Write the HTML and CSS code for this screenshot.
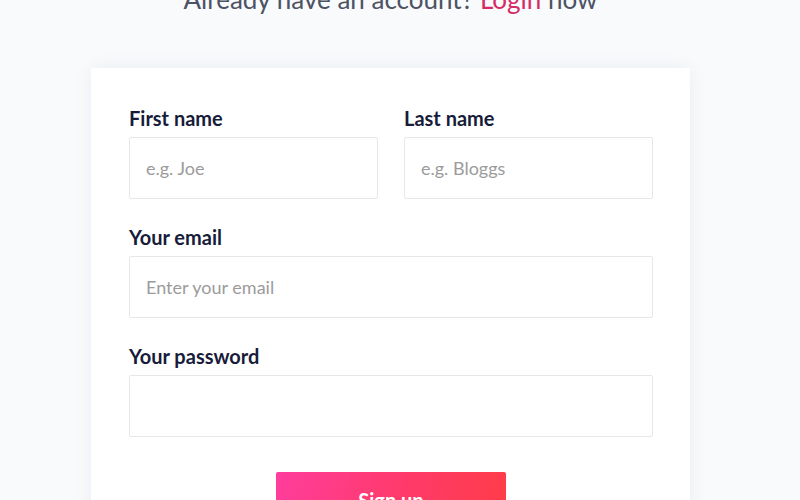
FILE: index.html
```html
<!DOCTYPE html>
<html lang="en">
<head>
<meta charset="utf-8">
<title>Sign up</title>
<link rel="stylesheet" href="styles.css">
</head>
<body>
<main class="page">
  <p class="intro">Already have an account? <a class="intro-link" href="#">Login</a> now</p>
  <form class="card">
    <div class="row two">
      <div class="field">
        <label class="label" for="fn">First name</label>
        <input class="input" id="fn" type="text" placeholder="e.g. Joe">
      </div>
      <div class="field">
        <label class="label" for="ln">Last name</label>
        <input class="input" id="ln" type="text" placeholder="e.g. Bloggs">
      </div>
    </div>
    <div class="field">
      <label class="label" for="em">Your email</label>
      <input class="input" id="em" type="email" placeholder="Enter your email">
    </div>
    <div class="field">
      <label class="label" for="pw">Your password</label>
      <input class="input" id="pw" type="password">
    </div>
    <div class="actions">
      <button class="btn" type="button">Sign up</button>
    </div>
  </form>
</main>
</body>
</html>
```
FILE: styles.css
```css
html, body {
  margin: 0;
  padding: 0;
  height: 100%;
  overflow: hidden;
}
body {
  background: #f9fafc;
  font-family: Lato, "Noto Sans", sans-serif;
  color: #1a1f3d;
}
.page {
  display: flex;
  flex-direction: column;
  align-items: center;
  padding-right: 19px;
}
.intro {
  margin: -17px 0 0 0;
  font-size: 26px;
  line-height: 32px;
  color: #4c5364;
  text-align: center;
}
.intro-link {
  color: #d42c67;
  text-decoration: none;
}
.card {
  margin-top: 53px;
  width: 524px;
  padding: 38px 37px 40px 38px;
  background: #fff;
  box-shadow: 0 0 18px rgba(30, 40, 70, 0.06);
  display: flex;
  flex-direction: column;
  gap: 26px;
}
.row.two {
  display: grid;
  grid-template-columns: 1fr 1fr;
  gap: 26px;
}
.field {
  display: flex;
  flex-direction: column;
  gap: 7px;
}
.label {
  font-size: 20px;
  line-height: 24px;
  font-weight: 700;
  color: #171c3a;
}
.input {
  box-sizing: border-box;
  height: 62px;
  width: 100%;
  border: 1px solid #e5e7ea;
  border-radius: 2px;
  padding: 0 16px;
  font-family: Lato, "Noto Sans", sans-serif;
  font-size: 18px;
  color: #333;
  background: #fff;
  outline: none;
}
.input::placeholder {
  color: #9b9b9b;
}
.actions {
  display: flex;
  justify-content: center;
  padding-top: 9px;
}
.btn {
  width: 230px;
  height: 56px;
  border: 0;
  border-radius: 2px;
  background: linear-gradient(100deg, #ff3d9c 0%, #ff3a6a 55%, #ff3c48 100%);
  color: #fff;
  font-family: Lato, "Noto Sans", sans-serif;
  font-size: 20px;
  font-weight: 700;
}
```
